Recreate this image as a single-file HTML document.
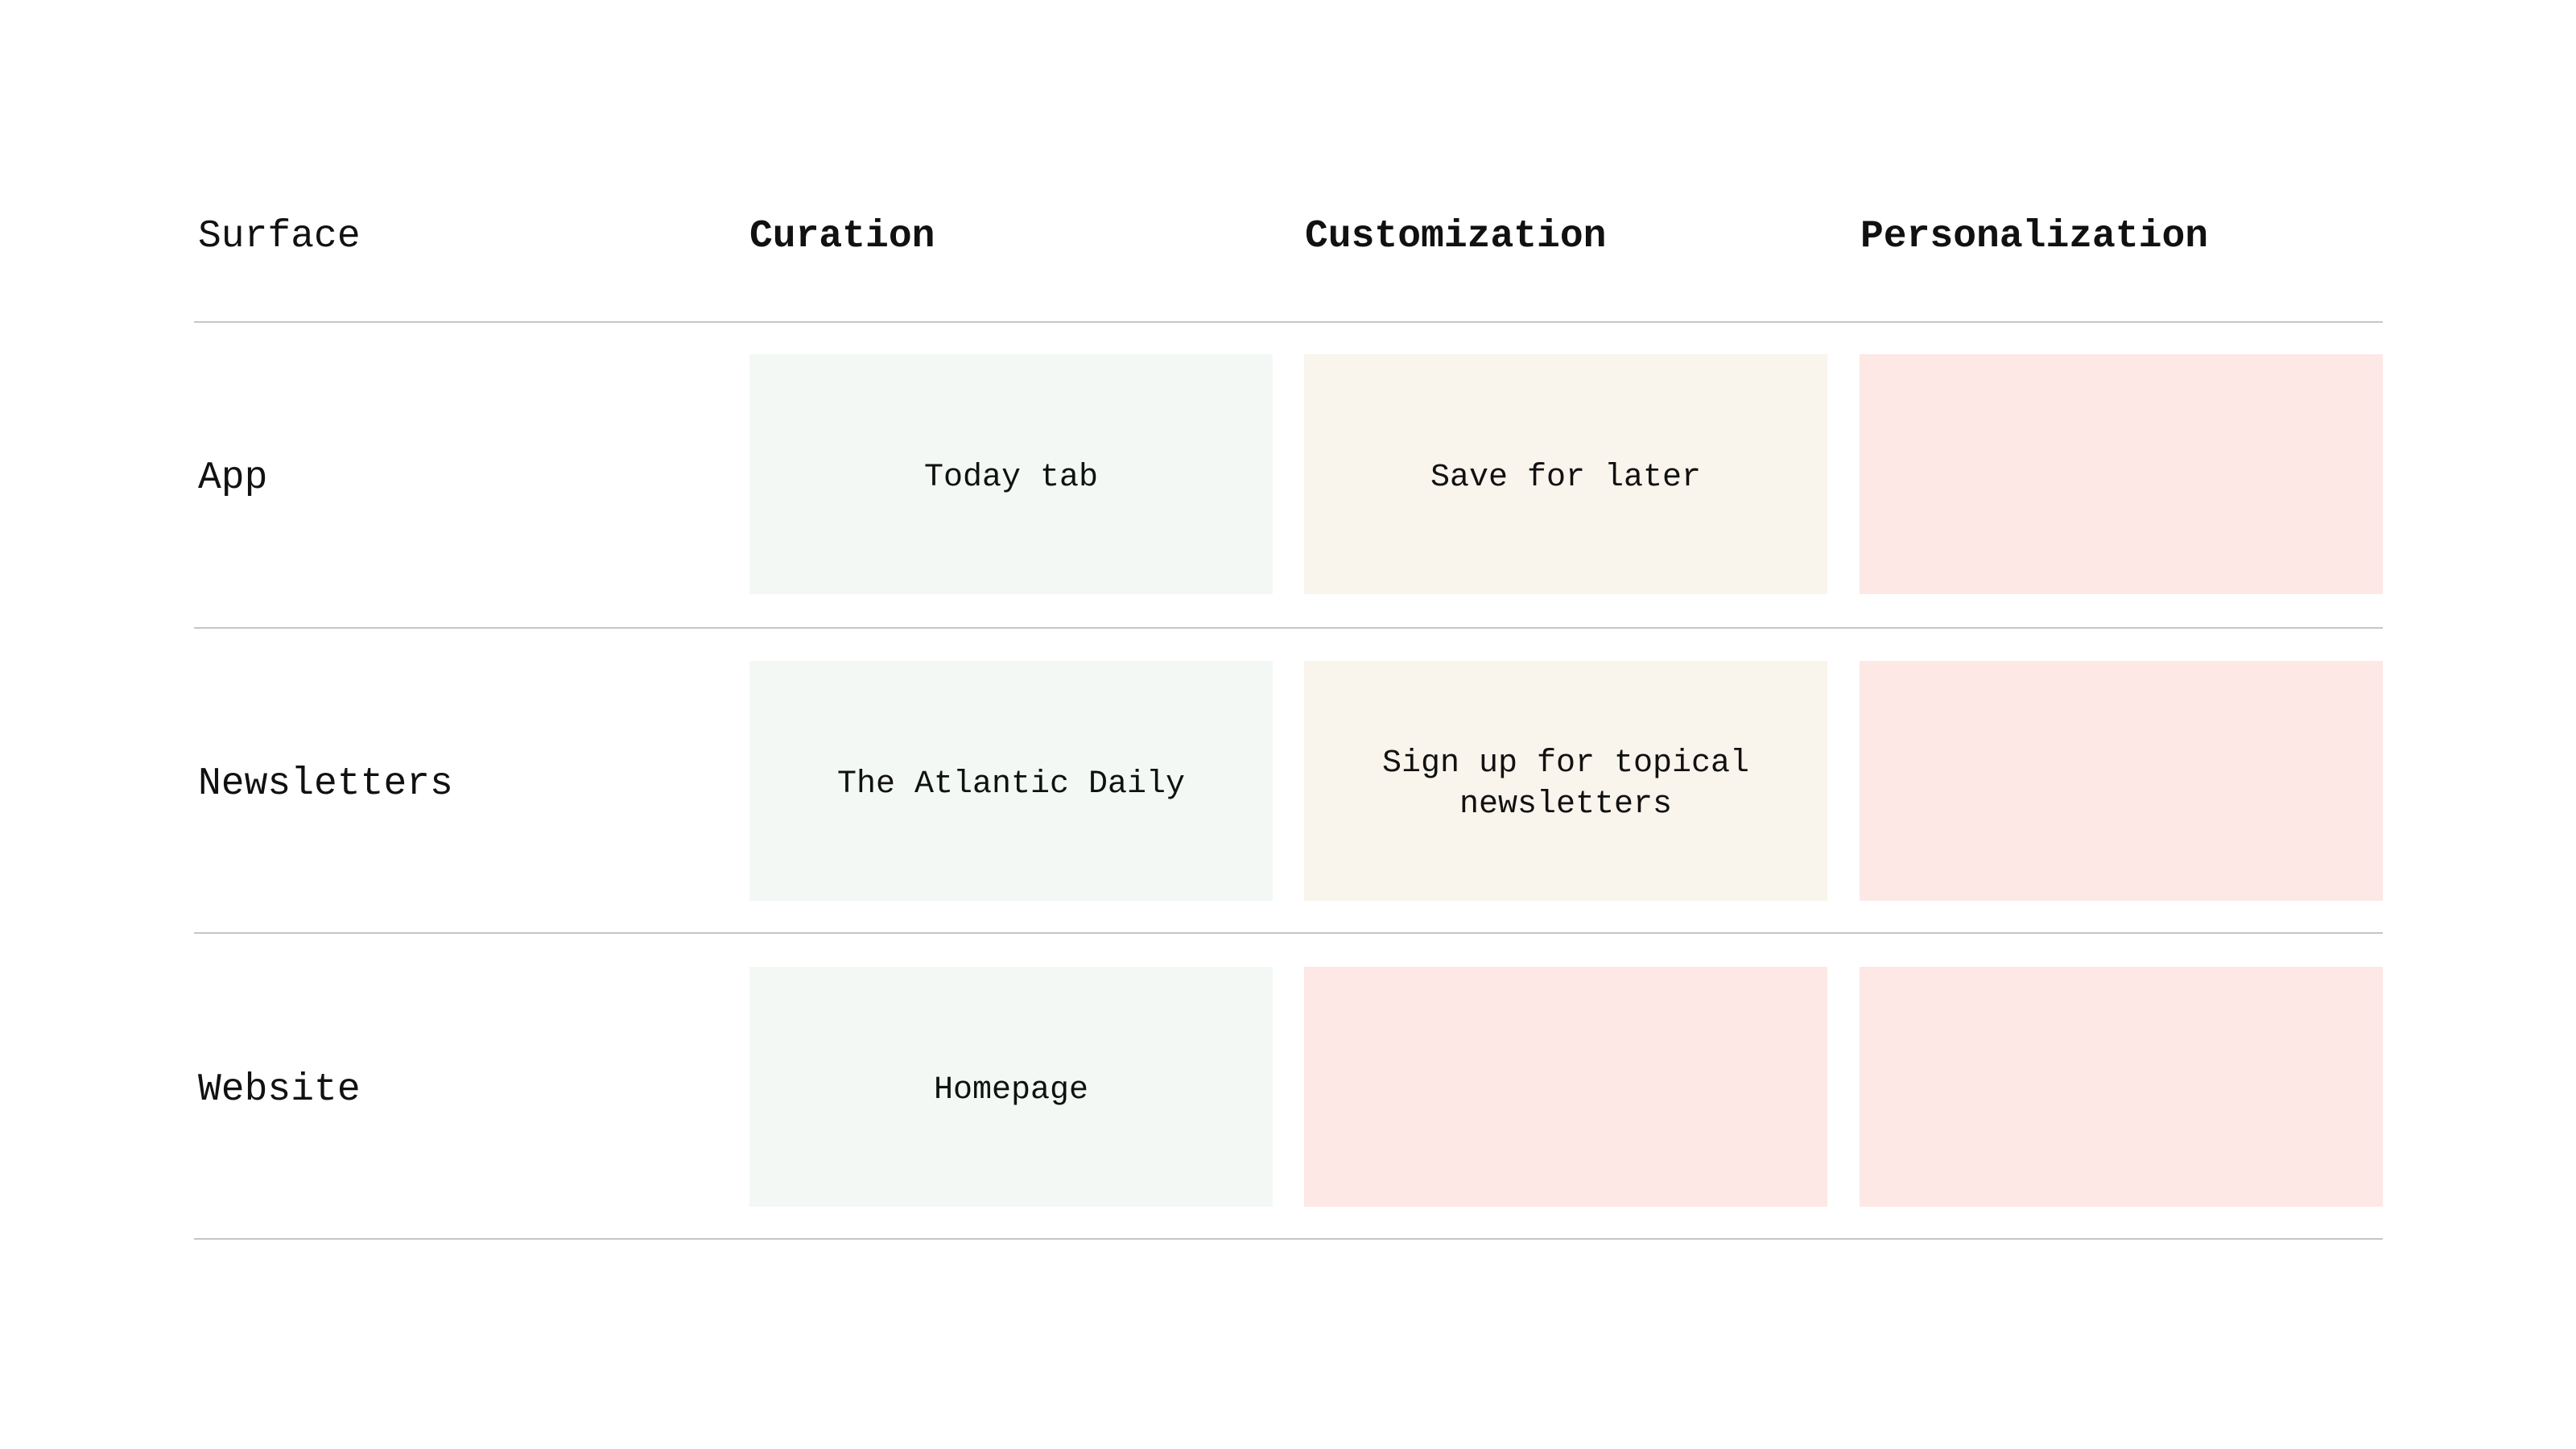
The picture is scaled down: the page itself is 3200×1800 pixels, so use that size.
<!DOCTYPE html>
<html><head><style>
html,body{margin:0;padding:0;background:#fff;}
body{width:3200px;height:1800px;position:relative;font-family:"Liberation Mono","DejaVu Sans Mono",monospace;color:#111;}
.t{position:absolute;white-space:nowrap;}
.h{font-size:48px;top:266px;line-height:56px;}
.b{font-weight:bold;}
.line{position:absolute;left:241px;width:2719px;height:2px;background:#c6c6c6;}
.box{position:absolute;width:650px;height:298px;display:flex;align-items:center;justify-content:center;text-align:center;font-size:40px;line-height:51px;}
.box span{position:relative;top:4px;}
.g{background:#f3f8f5;}.y{background:#f9f4ec;}.p{background:#fde8e6;}
.lab{font-size:48px;line-height:56px;left:246px;}
</style></head><body>
<div class="t h" style="left:246px">Surface</div>
<div class="t h b" style="left:931px">Curation</div>
<div class="t h b" style="left:1621px">Customization</div>
<div class="t h b" style="left:2311px">Personalization</div>
<div class="line" style="top:399px"></div>
<div class="line" style="top:779px"></div>
<div class="line" style="top:1158px"></div>
<div class="line" style="top:1538px"></div>
<div class="t lab" style="top:566px">App</div>
<div class="t lab" style="top:946px">Newsletters</div>
<div class="t lab" style="top:1326px">Website</div>
<div class="box g" style="left:931px;top:440px"><span>Today tab</span></div>
<div class="box y" style="left:1620px;top:440px"><span>Save for later</span></div>
<div class="box p" style="left:2310px;top:440px"></div>
<div class="box g" style="left:931px;top:821px"><span>The Atlantic Daily</span></div>
<div class="box y" style="left:1620px;top:821px"><span>Sign up for topical<br>newsletters</span></div>
<div class="box p" style="left:2310px;top:821px"></div>
<div class="box g" style="left:931px;top:1201px"><span>Homepage</span></div>
<div class="box p" style="left:1620px;top:1201px"></div>
<div class="box p" style="left:2310px;top:1201px"></div>
</body></html>
